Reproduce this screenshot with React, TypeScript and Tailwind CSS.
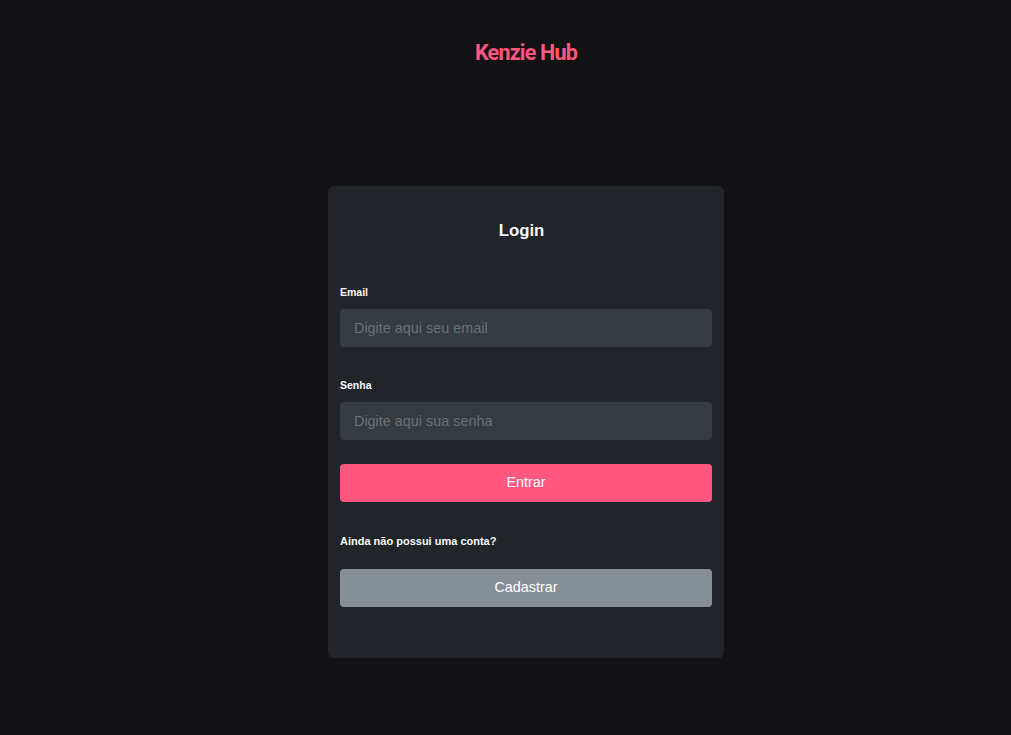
import React from 'react';

const Field = ({ label, placeholder, type }: { label: string; placeholder: string; type: string }) => (
  <div className="flex flex-col">
    <label className="text-[10.5px] leading-[14px] font-bold text-[#f8f9fa] mb-[10px]">{label}</label>
    <input
      type={type}
      placeholder={placeholder}
      className="h-[38px] w-full rounded-[4px] bg-[#343b41] px-[14px] text-[14.4px] text-[#f8f9fa] placeholder:text-[#6c7075] outline-none"
    />
  </div>
);

const App = () => {
  return (
    <main
      className="min-h-screen bg-[#121214] flex flex-col items-center pl-[41px] pt-[40px]"
      style={{ fontFamily: '"Liberation Sans", Arial, sans-serif' }}
    >
      {/* Logo */}
      <h1
        className="text-[21.5px] leading-[26px] font-bold text-[#ff577f] tracking-[-0.8px]"
        style={{ fontFamily: 'Roboto, "Liberation Sans", sans-serif' }}
      >
        Kenzie Hub
      </h1>

      <form className="mt-[120px] w-[396px] rounded-[6px] bg-[#212529] px-3 pt-[35px] pb-[51px] flex flex-col">
        <h2 className="text-center text-[16.8px] leading-[20px] font-bold text-[#f8f9fa] mb-[44px] pr-[9px]">Login</h2>

        <Field label="Email" placeholder="Digite aqui seu email" type="email" />
        <div className="mt-[31px]">
          <Field label="Senha" placeholder="Digite aqui sua senha" type="password" />
        </div>

        <button
          type="button"
          className="mt-[24px] h-[38px] w-full rounded-[4px] bg-[#ff577f] text-[14.4px] text-white"
        >
          Entrar
        </button>

        <p className="mt-[32px] text-[11px] leading-[14px] font-bold text-[#f8f9fa]">Ainda não possui uma conta?</p>

        <button
          type="button"
          className="mt-[21px] h-[38px] w-full rounded-[4px] bg-[#868e96] text-[14.4px] text-white"
        >
          Cadastrar
        </button>
      </form>
    </main>
  );
};

export default App;
